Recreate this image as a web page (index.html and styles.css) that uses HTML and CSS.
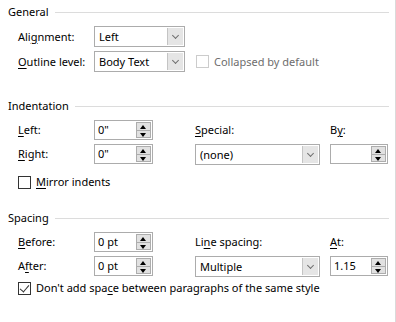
FILE: index.html
```html
<!DOCTYPE html>
<html lang="en">
<head>
    <meta charset="UTF-8">
    <title>Paragraph</title>
    <link rel="stylesheet" href="styles.css">
</head>
<body>
    <div class="dialog">
        <!-- General -->
        <div class="group-title">General</div>
        <div class="grid rows-general">
            <span class="label">Ali<u>g</u>nment:</span>
            <div class="combo short"><span class="value">Left</span><span class="drop"></span></div>
            <span></span><span></span>

            <span class="label"><u>O</u>utline level:</span>
            <div class="combo short"><span class="value">Body Text</span><span class="drop"></span></div>
            <label class="check disabled span2"><span class="box"></span>Collapsed by default</label>
        </div>

        <!-- Indentation -->
        <div class="group-title gap-top">Indentation</div>
        <div class="grid rows-spin">
            <span class="label"><u>L</u>eft:</span>
            <div class="spin"><span class="value">0"</span><span class="arrows"><i class="up"></i><i class="down"></i></span></div>
            <span class="label"><u>S</u>pecial:</span>
            <span class="label">B<u>y</u>:</span>

            <span class="label"><u>R</u>ight:</span>
            <div class="spin"><span class="value">0"</span><span class="arrows"><i class="up"></i><i class="down"></i></span></div>
            <div class="combo wide"><span class="value">(none)</span><span class="drop"></span></div>
            <div class="spin small"><span class="value"></span><span class="arrows"><i class="up"></i><i class="down"></i></span></div>
        </div>
        <label class="check mirror"><span class="box"></span><span><u>M</u>irror indents</span></label>

        <!-- Spacing -->
        <div class="group-title gap-top2">Spacing</div>
        <div class="grid rows-spin">
            <span class="label"><u>B</u>efore:</span>
            <div class="spin"><span class="value">0 pt</span><span class="arrows"><i class="up"></i><i class="down"></i></span></div>
            <span class="label">Li<u>n</u>e spacing:</span>
            <span class="label"><u>A</u>t:</span>

            <span class="label">A<u>f</u>ter:</span>
            <div class="spin"><span class="value">0 pt</span><span class="arrows"><i class="up"></i><i class="down"></i></span></div>
            <div class="combo wide"><span class="value">Multiple</span><span class="drop"></span></div>
            <div class="spin small"><span class="value">1.15</span><span class="arrows"><i class="up"></i><i class="down"></i></span></div>
        </div>
        <label class="check same-style"><span class="box checked"></span><span>Don't add spa<u>c</u>e between paragraphs of the same style</span></label>
    </div>
</body>
</html>
```

FILE: styles.css
```css
* {
    box-sizing: border-box;
}

body {
    margin: 0;
    background: #fff;
    font-family: "Noto Sans", "Liberation Sans", sans-serif;
    font-size: 11px;
    color: #000;
    overflow: hidden;
}

.dialog {
    width: 396px;
    height: 322px;
    padding: 4px 6px 0 8px;
    border-right: 1px solid #dadada;
}

u {
    text-decoration-thickness: 1px;
    text-underline-offset: 2px;
}

/* 分组标题 */
.group-title {
    display: flex;
    align-items: center;
    height: 16px;
    line-height: 16px;
    gap: 6px;
    margin-bottom: 6px;
}

.group-title::after {
    content: "";
    flex: 1;
    height: 1px;
    background: #dcdcdc;
}

.gap-top {
    margin-top: 26px;
}

.gap-top2 {
    margin-top: 20px;
}

.grid {
    display: grid;
    grid-template-columns: 76px 101px 135px 58px;
    margin-left: 10px;
    row-gap: 4px;
    align-items: center;
}

.rows-general {
    grid-auto-rows: 21px;
}

.rows-spin {
    grid-auto-rows: 20px;
}

.label {
    white-space: nowrap;
    line-height: 16px;
}

/* 下拉框 */
.combo {
    display: flex;
    height: 21px;
    border: 1px solid #acacac;
    background: #fff;
    padding: 1px;
}

.combo.short {
    width: 91px;
}

.combo.wide {
    width: 125px;
}

.combo .value {
    flex: 1;
    padding-left: 3px;
    line-height: 17px;
    white-space: nowrap;
}

.combo .drop {
    width: 16px;
    background: #e5e5e5;
    border-left: 1px solid #c4c4c4;
    position: relative;
}

.combo .drop::after {
    content: "";
    position: absolute;
    left: 5px;
    top: 5px;
    width: 4px;
    height: 4px;
    border-right: 1px solid #707070;
    border-bottom: 1px solid #707070;
    transform: rotate(45deg);
}

/* 数值框 */
.spin {
    display: flex;
    width: 59px;
    height: 20px;
    border: 1px solid #acacac;
    padding: 1px;
}

.spin.small {
    width: 58px;
}

.spin .value {
    flex: 1;
    padding-left: 2px;
    line-height: 16px;
}

.spin .arrows {
    width: 15px;
    display: flex;
    flex-direction: column;
    border: 1px solid #adadad;
    background: #e1e1e1;
}

.spin .arrows i {
    flex: 1;
    position: relative;
}

.spin .arrows i + i {
    border-top: 1px solid #adadad;
}

.spin .arrows i::after {
    content: "";
    position: absolute;
    left: 3px;
    top: 2px;
    border-left: 3.5px solid transparent;
    border-right: 3.5px solid transparent;
}

.spin .arrows .up::after {
    border-bottom: 4px solid #000;
}

.spin .arrows .down::after {
    top: 2px;
    border-top: 4px solid #000;
}

/* 复选框 */
.check {
    display: flex;
    align-items: center;
    gap: 5px;
    line-height: 16px;
    white-space: nowrap;
}

.check .box {
    width: 13px;
    height: 13px;
    border: 1px solid #333;
    background: #fff;
    position: relative;
    flex: none;
}

.check .box.checked::after {
    content: "";
    position: absolute;
    left: 3px;
    top: 0px;
    width: 4px;
    height: 8px;
    border-right: 1px solid #333;
    border-bottom: 1px solid #333;
    transform: rotate(40deg);
}

.check.disabled {
    color: #6d6d6d;
    padding-left: 1px;
}

.check.disabled .box {
    border-color: #cccccc;
}

.span2 {
    grid-column: span 2;
}

.mirror {
    margin: 10px 0 0 10px;
}

.same-style {
    margin: 4px 0 0 10px;
}
```
